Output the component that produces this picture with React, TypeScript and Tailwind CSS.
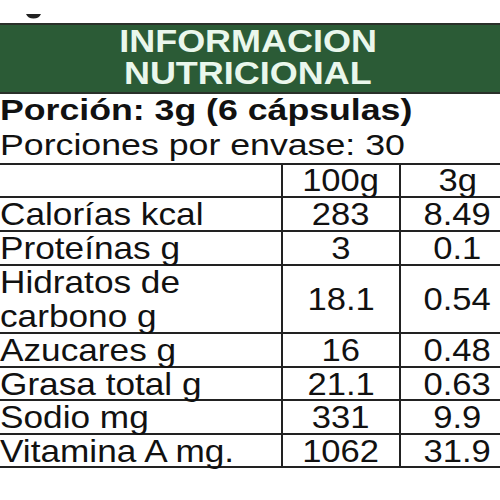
import React from 'react';

interface RowProps {
  label: string[];
  per100: string;
  perPortion: string;
  height: string;
}

const rows: RowProps[] = [
  { label: ['Calorías kcal'], per100: '283', perPortion: '8.49', height: 'h-[34px]' },
  { label: ['Proteínas g'], per100: '3', perPortion: '0.1', height: 'h-[34px]' },
  { label: ['Hidratos de', 'carbono g'], per100: '18.1', perPortion: '0.54', height: 'h-[68px]' },
  { label: ['Azucares g'], per100: '16', perPortion: '0.48', height: 'h-[34px]' },
  { label: ['Grasa total g'], per100: '21.1', perPortion: '0.63', height: 'h-[33px]' },
  { label: ['Sodio mg'], per100: '331', perPortion: '9.9', height: 'h-[34px]' },
  { label: ['Vitamina A mg.'], per100: '1062', perPortion: '31.9', height: 'h-[33px]' },
];

const NutrientRow: React.FC<RowProps> = ({ label, per100, perPortion, height }) => {
  return (
    <div className={`flex border-b-2 border-[#222] ${height}`}>
      <div className="flex w-[281px] shrink-0 flex-col justify-center">
        {label.map((line) => (
          <div key={line} className="leading-[34px]">
            <span className="inline-block origin-left scale-x-[1.1] whitespace-nowrap">{line}</span>
          </div>
        ))}
      </div>
      <div className="flex w-[118px] shrink-0 items-center justify-center border-l-2 border-[#222] leading-[34px]">
        <span className="inline-block scale-x-[1.08]">{per100}</span>
      </div>
      <div className="flex w-[115px] shrink-0 items-center justify-center border-l-2 border-[#222] leading-[34px]">
        <span className="inline-block scale-x-[1.08]">{perPortion}</span>
      </div>
    </div>
  );
};

export default function App() {
  return (
    <div className="h-[500px] w-[500px] overflow-hidden bg-white font-['Liberation_Sans',Arial,sans-serif] text-[#111]">
      <div className="h-[23px] pl-[26px] pt-[13px]">
        <svg width="15" height="6" viewBox="0 0 15 6">
          <path d="M0 1 L15 1 Q13 5.5 7.5 5.5 Q2 5.5 0 1 Z" fill="#222" />
        </svg>
      </div>

      <div className="border-y-2 border-[#2a302a] bg-[#2b5b36] pb-[2px] pr-[4px] pt-[1px] text-center text-[31px] font-bold leading-[32px] text-[#eaf7ec]">
        <div>
          <span className="inline-block scale-x-[1.16]">INFORMACION</span>
        </div>
        <div>
          <span className="inline-block scale-x-[1.16]">NUTRICIONAL</span>
        </div>
      </div>

      <div className="text-[29px] font-bold leading-[32px]">
        <span className="inline-block origin-left scale-x-[1.23] whitespace-nowrap">Porción: 3g (6 cápsulas)</span>
      </div>
      <div className="text-[30px] leading-[37px]">
        <span className="inline-block origin-left scale-x-[1.19] whitespace-nowrap">Porciones por envase: 30</span>
      </div>

      <div className="w-[514px] border-t-2 border-[#222] text-[32px]">
        <div className="flex h-[33px] border-b-2 border-[#222]">
          <div className="w-[281px] shrink-0" />
          <div className="flex w-[118px] shrink-0 items-center justify-center border-l-2 border-[#222] leading-[33px]">
            <span className="inline-block scale-x-[1.08]">100g</span>
          </div>
          <div className="flex w-[115px] shrink-0 items-center justify-center border-l-2 border-[#222] leading-[33px]">
            <span className="inline-block scale-x-[1.08]">3g</span>
          </div>
        </div>
        {rows.map((row) => (
          <NutrientRow key={row.label[0]} {...row} />
        ))}
      </div>
    </div>
  );
}
